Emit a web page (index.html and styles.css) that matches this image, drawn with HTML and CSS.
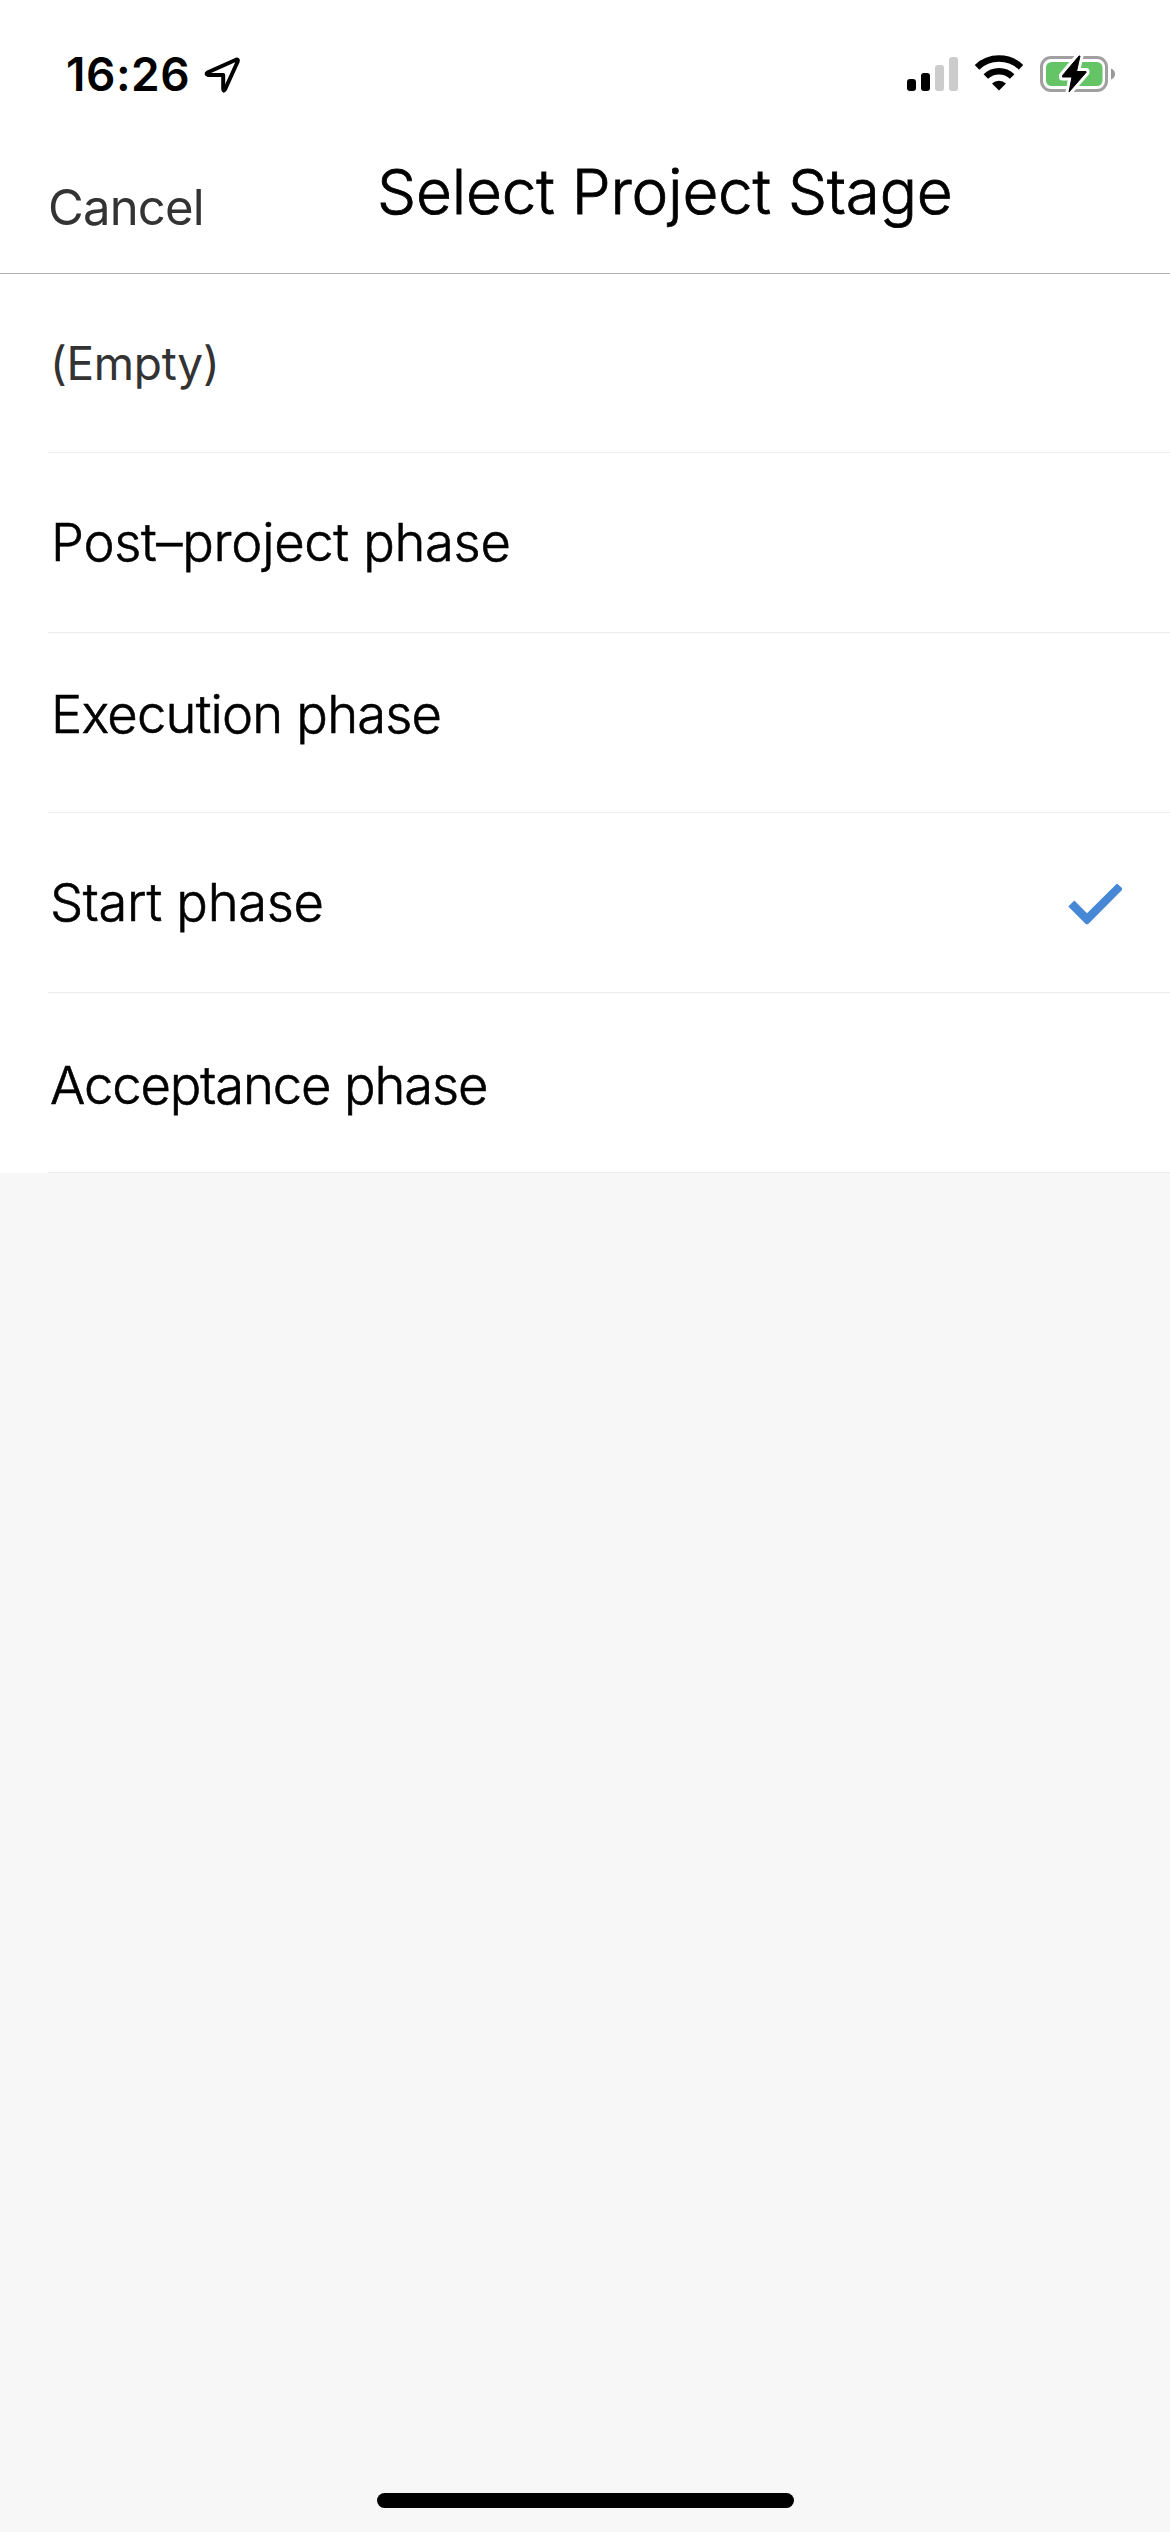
FILE: index.html
```
<!DOCTYPE html>
<html lang="en">
<head>
<meta charset="utf-8">
<title>Select Project Stage</title>
<link rel="stylesheet" href="styles.css">
</head>
<body>
<div class="screen">
  <header class="header">
    <div class="status">
      <span class="time">16:26</span>
      <svg class="location" width="44" height="40" viewBox="200 54 44 40"><path d="M207.500 72.500L236 59.700Q238.500 59 237.700 61.500L225 89.500Q223.300 92 223.200 89V75H208Q205.500 74 207.500 72.500Z" fill="none" stroke="#000" stroke-width="4" stroke-linejoin="round"/></svg>
      <svg class="indicators" width="212" height="40" viewBox="904 54 212 40">
        <rect x="907" y="79" width="9" height="12" rx="3"/>
        <rect x="921" y="73" width="9" height="18" rx="3"/>
        <rect x="935" y="65" width="9" height="26" rx="3" fill="#ccc"/>
        <rect x="949" y="57" width="9" height="34" rx="3" fill="#ccc"/>
        <path d="M977 67.300A32.200 32.200 0 0 1 1021 67.300" fill="none" stroke="#000" stroke-width="6.500"/>
        <path d="M985.800 76.500A19.200 19.200 0 0 1 1012.200 76.500" fill="none" stroke="#000" stroke-width="6.500"/>
        <path d="M992 83.500A10 10 0 0 1 1006 83.500L999 90.500Z"/>
        <rect x="1041.500" y="57.500" width="65" height="33" rx="9.500" fill="none" stroke="#a0a0a0" stroke-width="3"/>
        <path d="M1111 68.500Q1115 70 1115 74T1111 79.500Z" fill="#999"/>
        <rect x="1046" y="62" width="56.500" height="24" rx="5.500" fill="#65c466"/>
        <path d="M1079 56L1062.500 75.500V77H1072L1069 92L1086 72.500V71.500H1076.500L1080 56Z" stroke="#fff" stroke-width="7" stroke-linejoin="round"/>
        <path d="M1079 56L1062.500 75.500V77H1072L1069 92L1086 72.500V71.500H1076.500L1080 56Z" stroke="#000" stroke-width="1" stroke-linejoin="round"/>
      </svg>
    </div>
    <nav class="nav">
      <span class="cancel">Cancel</span>
      <h1 class="title">Select Project Stage</h1>
    </nav>
  </header>
  <ul class="list">
    <li class="row row-empty"><span class="label">(Empty)</span></li>
    <li class="row row-post"><span class="label">Post–project phase</span></li>
    <li class="row row-execution"><span class="label">Execution phase</span></li>
    <li class="row row-start"><span class="label">Start phase</span>
      <svg class="check" width="57" height="44" viewBox="1068 880.500 57 44"><path d="M1068.300 906L1074.300 900L1087 912.700L1117 883L1122 887.500V889.500L1088 923.700H1086Z" fill="#4788d6"/></svg></li>
    <li class="row row-acceptance"><span class="label">Acceptance phase</span></li>
  </ul>
  <div class="home"></div>
</div>
</body>
</html>
```
FILE: styles.css
```
* { box-sizing: border-box; }
body { margin: 0; background: #f7f7f7; font-family: Inter, "Liberation Sans", sans-serif; color: #000; }
.screen { width: 1170px; height: 2532px; display: flex; flex-direction: column; }
.header { height: 274px; background: #fff; border-bottom: 1px solid #b2b2b2; }
.status { height: 148px; display: flex; align-items: center; padding: 0 54px 0 66px; }
.time { width: 134px; font-size: 46px; font-weight: 600; line-height: 60px; letter-spacing: 0.5px; }
.indicators { margin-left: auto; }
.nav { height: 125px; display: grid; grid-template-columns: 329px 1fr; padding-left: 48px; align-items: start; }
.cancel { font-size: 49px; line-height: 60px; color: #333; padding-top: 30px; letter-spacing: -0.8px; }
.title { margin: 0; font-size: 62px; font-weight: 300; line-height: 80px; padding-top: 4px; white-space: nowrap; letter-spacing: -0.2px; -webkit-text-stroke: 0.8px #000; }
.list { list-style: none; margin: 0; padding: 0 0 0 48px; background: #fff; }
.row { height: 180px; display: flex; align-items: center; justify-content: space-between; border-bottom: 1px solid #ededed; font-size: 52.5px; font-weight: 300; padding: 0 45px 0 3px; -webkit-text-stroke: 0.6px #000; }
.label { padding-bottom: 2px; }
.row-empty { height: 179px; padding-left: 2px; font-size: 46px; font-weight: 400; color: #333; letter-spacing: -0.3px; -webkit-text-stroke: 0; }
.row-empty .label { padding-bottom: 0; }
.row-post { letter-spacing: -0.3px; }
.row-execution { padding-bottom: 16px; letter-spacing: -0.8px; }
.row-start { padding-left: 2px; letter-spacing: -0.3px; }
.row-acceptance { padding-top: 7px; padding-left: 2px; letter-spacing: -1.1px; }
.home { width: 417px; height: 15px; border-radius: 8px; background: #000; margin: auto auto 24px; }
```
